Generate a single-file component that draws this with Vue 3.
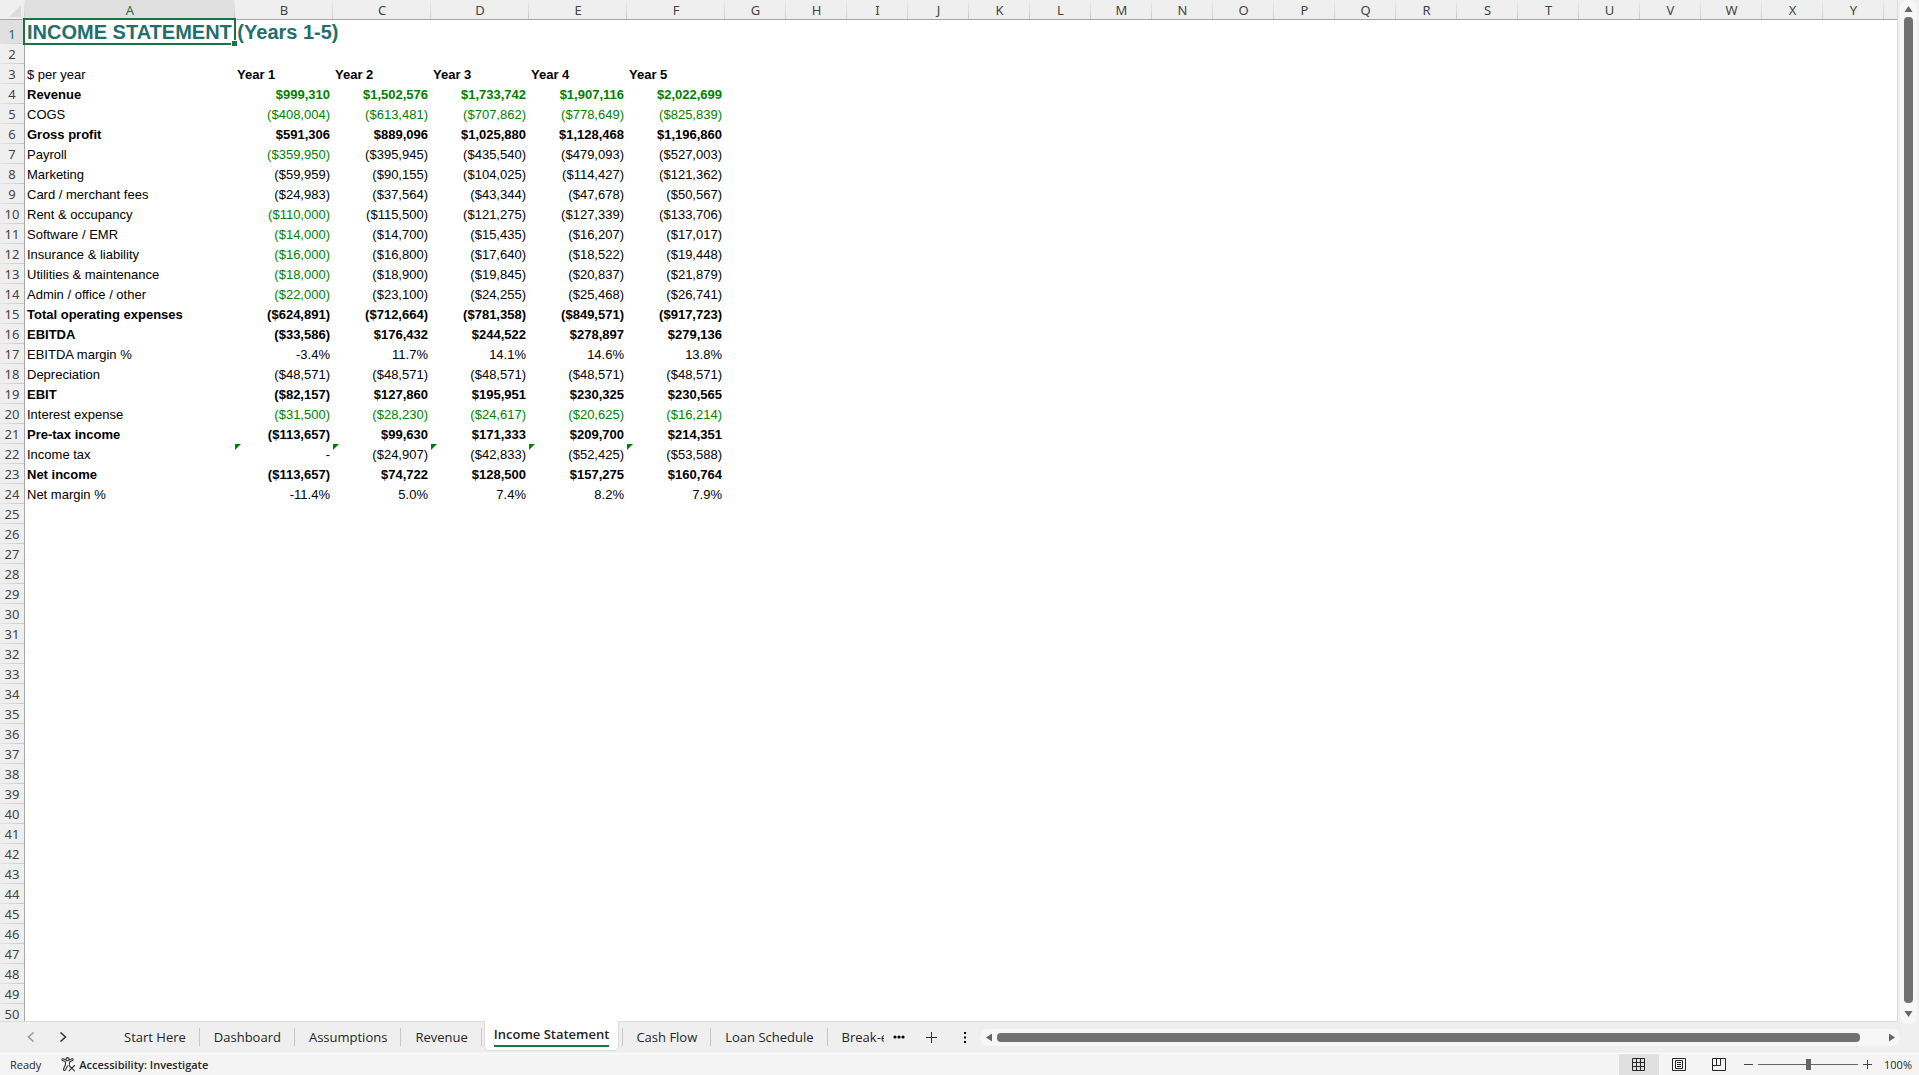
<script setup>
import { ref } from 'vue'

const wide = ['B', 'C', 'D', 'E', 'F']
const narrow = 'GHIJKLMNOPQRSTUVWXY'.split('')

// g: columns shown in green (linked inputs); b: bold row; flag: error indicator
const lines = {
  4: { label: 'Revenue', b: true, g: 5, v: ['$999,310', '$1,502,576', '$1,733,742', '$1,907,116', '$2,022,699'] },
  5: { label: 'COGS', g: 5, v: ['($408,004)', '($613,481)', '($707,862)', '($778,649)', '($825,839)'] },
  6: { label: 'Gross profit', b: true, v: ['$591,306', '$889,096', '$1,025,880', '$1,128,468', '$1,196,860'] },
  7: { label: 'Payroll', g: 1, v: ['($359,950)', '($395,945)', '($435,540)', '($479,093)', '($527,003)'] },
  8: { label: 'Marketing', v: ['($59,959)', '($90,155)', '($104,025)', '($114,427)', '($121,362)'] },
  9: { label: 'Card / merchant fees', v: ['($24,983)', '($37,564)', '($43,344)', '($47,678)', '($50,567)'] },
  10: { label: 'Rent & occupancy', g: 1, v: ['($110,000)', '($115,500)', '($121,275)', '($127,339)', '($133,706)'] },
  11: { label: 'Software / EMR', g: 1, v: ['($14,000)', '($14,700)', '($15,435)', '($16,207)', '($17,017)'] },
  12: { label: 'Insurance & liability', g: 1, v: ['($16,000)', '($16,800)', '($17,640)', '($18,522)', '($19,448)'] },
  13: { label: 'Utilities & maintenance', g: 1, v: ['($18,000)', '($18,900)', '($19,845)', '($20,837)', '($21,879)'] },
  14: { label: 'Admin / office / other', g: 1, v: ['($22,000)', '($23,100)', '($24,255)', '($25,468)', '($26,741)'] },
  15: { label: 'Total operating expenses', b: true, v: ['($624,891)', '($712,664)', '($781,358)', '($849,571)', '($917,723)'] },
  16: { label: 'EBITDA', b: true, v: ['($33,586)', '$176,432', '$244,522', '$278,897', '$279,136'] },
  17: { label: 'EBITDA margin %', v: ['-3.4%', '11.7%', '14.1%', '14.6%', '13.8%'] },
  18: { label: 'Depreciation', v: ['($48,571)', '($48,571)', '($48,571)', '($48,571)', '($48,571)'] },
  19: { label: 'EBIT', b: true, v: ['($82,157)', '$127,860', '$195,951', '$230,325', '$230,565'] },
  20: { label: 'Interest expense', g: 5, v: ['($31,500)', '($28,230)', '($24,617)', '($20,625)', '($16,214)'] },
  21: { label: 'Pre-tax income', b: true, v: ['($113,657)', '$99,630', '$171,333', '$209,700', '$214,351'] },
  22: { label: 'Income tax', flag: true, v: ['-', '($24,907)', '($42,833)', '($52,425)', '($53,588)'] },
  23: { label: 'Net income', b: true, v: ['($113,657)', '$74,722', '$128,500', '$157,275', '$160,764'] },
  24: { label: 'Net margin %', v: ['-11.4%', '5.0%', '7.4%', '8.2%', '7.9%'] },
}
const emptyRows = Array.from({ length: 26 }, (_, i) => i + 25)

const tabs = ['Start Here', 'Dashboard', 'Assumptions', 'Revenue', 'Income Statement', 'Cash Flow', 'Loan Schedule', 'Break-even']
const active = ref('Income Statement')
const zoom = ref(50)
</script>

<template>
  <div class="app">
    <div class="work">
      <main class="sheet">
        <table>
          <colgroup>
            <col class="c-num" />
            <col class="c-a" />
            <col v-for="c in wide" :key="c" class="c-wide" />
            <col v-for="c in narrow" :key="c" class="c-narrow" />
            <col />
          </colgroup>
          <thead>
            <tr>
              <th class="corner"><svg width="12" height="12" viewBox="0 0 12 12"><path d="M12 0V12H0Z" fill="#dcdcdc" /></svg></th>
              <th scope="col" class="on">A</th>
              <th v-for="c in wide" :key="c" scope="col">{{ c }}</th>
              <th v-for="c in narrow" :key="c" scope="col">{{ c }}</th>
              <th class="rest"></th>
            </tr>
          </thead>
          <tbody>
            <tr class="first">
              <th scope="row" class="on">1</th>
              <td class="title">INCOME STATEMENT (Years 1-5)<span class="selection"></span><span class="handle"></span></td>
            </tr>
            <tr><th scope="row">2</th></tr>
            <tr>
              <th scope="row">3</th>
              <td>$ per year</td>
              <td v-for="n in 5" :key="n" class="bold">Year {{ n }}</td>
            </tr>
            <tr v-for="(r, n) in lines" :key="n" :class="{ bold: r.b }">
              <th scope="row">{{ n }}</th>
              <td>{{ r.label }}</td>
              <td v-for="(v, i) in r.v" :key="i" class="num" :class="{ green: i < (r.g || 0), flag: r.flag }">{{ v }}</td>
            </tr>
            <tr v-for="n in emptyRows" :key="n"><th scope="row">{{ n }}</th></tr>
          </tbody>
        </table>
      </main>
      <div class="vbar">
        <button aria-label="Scroll up"><svg width="9" height="8" viewBox="0 0 9 8"><path d="M4.5 1L8.500 7H.5Z" /></svg></button>
        <div class="thumb"></div>
        <button aria-label="Scroll down"><svg width="9" height="8" viewBox="0 0 9 8"><path d="M4.500 7L.5 1H8.500Z" /></svg></button>
      </div>
    </div>

    <nav class="tabbar">
      <button class="arrow dim" aria-label="Previous sheet"><svg width="8" height="10" viewBox="0 0 8 10"><path d="M6.500 .5L1.500 5L6.500 9.500" /></svg></button>
      <button class="arrow" aria-label="Next sheet"><svg width="8" height="10" viewBox="0 0 8 10"><path d="M1.500 .5L6.500 5L1.500 9.500" /></svg></button>
      <div class="tabs">
        <button v-for="t in tabs" :key="t" class="tab" :class="{ active: t === active }" @click="active = t"><span>{{ t }}</span></button>
      </div>
      <button class="tool more" aria-label="More sheets"><svg width="12" height="4" viewBox="0 0 12 4"><circle cx="2" cy="2" r="1.600" /><circle cx="6" cy="2" r="1.600" /><circle cx="10" cy="2" r="1.600" /></svg></button>
      <button class="tool add" aria-label="New sheet"><svg width="11" height="11" viewBox="0 0 11 11"><path d="M5.500 0V11M0 5.500H11" stroke="#333" /></svg></button>
      <button class="tool grip" aria-label="Resize tab bar"><svg width="2" height="11" viewBox="0 0 2 11"><path d="M0 0h2v2H0zM0 4.500h2v2H0zM0 9h2v2H0z" /></svg></button>
      <div class="hbar">
        <button aria-label="Scroll left"><svg width="8" height="9" viewBox="0 0 8 9"><path d="M1 4.500L7 .5V8.500Z" /></svg></button>
        <div class="thumb"></div>
        <button aria-label="Scroll right"><svg width="8" height="9" viewBox="0 0 8 9"><path d="M7 4.500L1 8.500V.5Z" /></svg></button>
      </div>
    </nav>

    <footer class="status">
      <span class="ready">Ready</span>
      <button class="access">
        <svg width="15" height="15" viewBox="0 0 15 15" fill="none" stroke="#333" stroke-width="1.100" stroke-linecap="round" stroke-linejoin="round">
          <circle cx="6.500" cy="2.200" r="1.600" />
          <path d="M4.900 2.900L2 1.800C.8 1.500.4 3 1.500 3.500L4.500 4.900V7.500L2.500 12C2.200 13.400 3.800 14 4.400 12.800L6.500 9M8.100 2.900L11 1.800C12.200 1.500 12.600 3 11.500 3.500L8.500 4.900V7.200M8 8.500L13.500 13.800M13.500 8.500L8 13.800" />
        </svg>
        Accessibility: Investigate
      </button>
      <div class="views">
        <button class="view on" aria-label="Normal"><svg width="14" height="14" viewBox="0 0 14 14"><path d="M.5 .5h12v12H.5zM4.500 .5v12M8.500 .5v12M.5 4.500h12M.5 8.500h12" /></svg></button>
        <button class="view" aria-label="Page layout"><svg width="14" height="14" viewBox="0 0 14 14"><path d="M.5 .5h13v12H.5zM3.500 2.500h7v8h-7zM5 4.500h4M5 6.500h4M5 8.500h4" /></svg></button>
        <button class="view" aria-label="Page break preview"><svg width="14" height="14" viewBox="0 0 14 14"><path d="M.5 .5h13v12H.5zM4.500 .5v7M8.500 .5v7M.5 7.500h8" /></svg></button>
      </div>
      <button class="step" aria-label="Zoom out"><svg width="9" height="9" viewBox="0 0 9 9"><path d="M0 4.500H9" /></svg></button>
      <input v-model="zoom" type="range" min="0" max="100" aria-label="Zoom" />
      <button class="step" aria-label="Zoom in"><svg width="9" height="9" viewBox="0 0 9 9"><path d="M0 4.500H9M4.500 0V9" /></svg></button>
      <button class="percent">100%</button>
    </footer>
  </div>
</template>

<style>
body {
  margin: 0;
}
</style>

<style scoped>
.app {
  display: flex;
  flex-direction: column;
  height: 100vh;
  overflow: hidden;
  background: #efefef;
  font-family: "Open Sans", "Noto Sans", sans-serif;
  color: #262626;
}
button {
  display: flex;
  align-items: center;
  justify-content: center;
  flex: none;
  padding: 0;
  border: 0;
  background: none;
  font: inherit;
  color: inherit;
}
svg {
  display: block;
  flex: none;
}

.work {
  display: flex;
  flex: 1;
  min-height: 0;
}
.sheet {
  flex: 1;
  min-width: 0;
  overflow: hidden;
  background: #fff;
  border-right: 1px solid #dcdcdc;
}
table {
  table-layout: fixed;
  width: 100%;
  border-spacing: 0;
  font-family: "Liberation Sans", Arial, sans-serif;
  font-size: 13px;
  line-height: 18px;
  color: #000;
}
.c-num { width: 25px; }
.c-a { width: 210px; }
.c-wide { width: 98px; }
.c-narrow { width: 61px; }
tr { height: 20px; }
th {
  box-sizing: border-box;
  height: 20px;
  padding: 0;
  background: #efefef;
  font: 400 13px/19px "Noto Sans", sans-serif;
  color: #444;
}
thead th {
  padding-top: 2px;
  border-bottom: 1px solid #a6a6a6;
  line-height: 17px;
  background: linear-gradient(#efefef, #c8c8c8) right / 1px 100% no-repeat #efefef;
}
tbody th {
  border-right: 1px solid #a6a6a6;
  background: linear-gradient(90deg, #e6e6e6, #c8c8c8) bottom / 100% 1px no-repeat #efefef;
}
th.corner {
  padding: 2px 3px 0 9px;
}
th.on {
  background-color: #e0e0e0;
  color: #1a7343;
}
th.rest {
  background-image: none;
}
.first th {
  padding-top: 4px;
}
td {
  box-sizing: border-box;
  position: relative;
  height: 20px;
  padding: 2px 2px 0;
  white-space: nowrap;
}
.first, .first th, .first td {
  height: 24px;
}
.first .title {
  padding: 0 2px;
  font-size: 20px;
  font-weight: 700;
  line-height: 24px;
  color: #1f6f6b;
}
.selection {
  position: absolute;
  inset: -2px -1px -1px -2px;
  border: 2px solid #1a7343;
}
.handle {
  position: absolute;
  right: -3px;
  bottom: -3px;
  width: 5px;
  height: 5px;
  border: 1px solid #fff;
  background: #1a7343;
}
.bold { font-weight: 700; }
.num {
  padding-right: 3px;
  text-align: right;
}
.green { color: #008000; }
.flag::before {
  content: "";
  position: absolute;
  top: 0;
  left: 0;
  width: 6px;
  height: 6px;
  background: #008000;
  clip-path: polygon(0 0, 100% 0, 0 100%);
}

.vbar {
  display: flex;
  flex-direction: column;
  align-items: center;
  width: 17px;
  margin: 0 2px -3px;
  border-radius: 8px;
  background: #f7f7f7;
  z-index: 1;
}
.vbar button {
  width: 17px;
  height: 17px;
}
.vbar button:last-child {
  height: 21px;
}
.thumb {
  flex: 1;
  border-radius: 4px;
  background: #707070;
}
.vbar .thumb { width: 9px; }
.vbar path, .hbar path { fill: #666; }

.tabbar {
  display: flex;
  align-items: center;
  box-sizing: border-box;
  height: 33px;
  padding-right: 19px;
  border-bottom: 1px solid #fff;
  background: linear-gradient(#dcdcdc, #dcdcdc) left top / calc(100% - 21px) 1px no-repeat #efefef;
}
.arrow {
  width: 32px;
  height: 24px;
}
.arrow:first-child { margin-left: 15px; }
.arrow path { fill: none; stroke: #333; stroke-width: 1.500; }
.arrow.dim path { stroke: #999; }
.tabs {
  display: flex;
  align-self: stretch;
  flex: none;
  width: 773px;
  margin-left: 32px;
  overflow: hidden;
}
.tab {
  position: relative;
  padding: 0 13px;
  margin-right: 1px;
  font-size: 13px;
  line-height: 20px;
  white-space: nowrap;
}
.tab:not(.active) + .tab:not(.active) {
  padding-left: 14px;
}
.tab::after {
  content: "";
  position: absolute;
  right: -1px;
  top: 7px;
  width: 1px;
  height: 18px;
  background: #c8c8c8;
}
.tab.active {
  align-self: flex-start;
  height: 29px;
  padding: 0 9px;
  margin: 0 5px 0 3px;
  background: #fff;
  border-radius: 0 0 4px 4px;
  box-shadow: 0 0 0 1px #dcdcdc;
  font-weight: 600;
}
.tab.active span {
  line-height: 21px;
  border-bottom: 2px solid #107c41;
}
.tab.active::after { right: -5px; }
.more { width: 30px; }
.add { width: 35px; }
.grip { width: 11px; margin-left: 10px; }
.hbar {
  display: flex;
  align-items: center;
  flex: 1;
  height: 17px;
  margin-left: 10px;
  border-radius: 8px;
  background: #f7f7f7;
}
.hbar button {
  width: 17px;
  height: 17px;
}
.hbar button:last-child { margin-left: 23px; }
.hbar .thumb { height: 9px; }

.status {
  display: flex;
  align-items: center;
  height: 21px;
  background: #f4f4f4;
  font-size: 11px;
}
.ready { margin-left: 10px; }
.access {
  gap: 3px;
  margin-left: 20px;
  font-weight: 600;
}
.views {
  display: flex;
  align-self: stretch;
  margin-left: auto;
}
.view { width: 40px; }
.view.on { background: #e0e0e0; }
.view path { fill: none; stroke: #262626; }
.step { width: 9px; }
.views + .step { margin-left: 5px; }
.step path { stroke: #444; }
.status input {
  appearance: none;
  width: 100px;
  height: 11px;
  margin: 0 5px;
  background: linear-gradient(#666, #666) center / 100% 1px no-repeat;
}
.status input::-webkit-slider-thumb {
  appearance: none;
  width: 5px;
  height: 11px;
  background: #666;
}
.percent {
  width: 32px;
  margin: 0 5px 0 10px;
}
</style>
